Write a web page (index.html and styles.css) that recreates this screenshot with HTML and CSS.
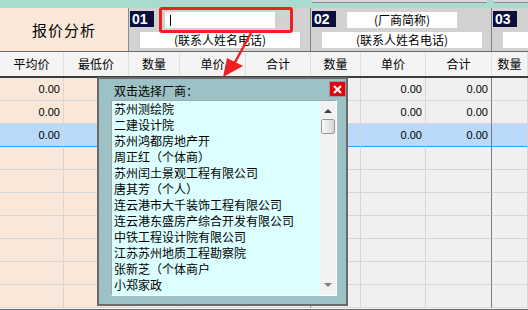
FILE: index.html
```html
<!DOCTYPE html>
<html>
<head>
    <link rel="stylesheet" href="styles.css">
</head>
<body>
    <div class="topbar">
        <span class="tb-box tb-a"></span>
        <span class="tb-box tb-b"></span>
    </div>
    <div class="head">
        <div class="title">报价分析</div>
        <div class="group">
            <div class="g-row">
                <span class="num">01</span>
                <span class="name-box"><span class="caret"></span></span>
            </div>
            <div class="contact">(联系人姓名电话)</div>
        </div>
        <div class="group">
            <div class="g-row">
                <span class="num">02</span>
                <span class="name-box">(厂商简称)</span>
            </div>
            <div class="contact">(联系人姓名电话)</div>
        </div>
        <div class="group last">
            <div class="g-row">
                <span class="num">03</span>
                <span class="name-box"></span>
            </div>
            <div class="contact"></div>
        </div>
    </div>
    <div class="cols grid">
        <div>平均价</div>
        <div>最低价</div>
        <div>数量</div>
        <div>单价</div>
        <div class="sep">合计</div>
        <div>数量</div>
        <div>单价</div>
        <div class="sep">合计</div>
        <div>数量</div>
    </div>
    <div id="rows"></div>
    <div class="bottom"></div>

    <div class="highlight"></div>
    <svg class="arrow" width="528" height="310" viewBox="0 0 528 310">
        <line x1="251" y1="33" x2="233" y2="66" stroke="#f02020" stroke-width="2.5"/>
        <polygon points="223,77 227,58 243,66" fill="#f02020"/>
    </svg>

    <div class="popup">
        <div class="close">
            <svg width="9" height="9" viewBox="0 0 9 9">
                <path d="M1 1 L8 8 M8 1 L1 8" stroke="#fff" stroke-width="2.2"/>
            </svg>
        </div>
        <div class="label">双击选择厂商：</div>
        <div class="list">
            <div class="items">
                <div>苏州测绘院</div>
                <div>二建设计院</div>
                <div>苏州鸿都房地产开</div>
                <div>周正红（个体商）</div>
                <div>苏州闰土景观工程有限公司</div>
                <div>唐其芳（个人）</div>
                <div>连云港市大千装饰工程有限公司</div>
                <div>连云港东盛房产综合开发有限公司</div>
                <div>中铁工程设计院有限公司</div>
                <div>江苏苏州地质工程勘察院</div>
                <div>张新芝（个体商户</div>
                <div>小郑家政</div>
                <div>上海王行</div>
            </div>
            <div class="scroll">
                <span class="up"></span>
                <span class="thumb"></span>
                <span class="down"></span>
            </div>
        </div>
    </div>

    <script>
        // 10 data rows, the first three carry values, the third is selected
        const rows = document.getElementById('rows');
        for (let i = 0; i < 10; i++) {
            const row = document.createElement('div');
            row.className = 'row grid' + (i === 2 ? ' selected' : '');
            const v = i < 3 ? '0.00' : '';
            row.innerHTML = `
                <div class="peach">${v}</div>
                <div class="peach"></div>
                <div></div>
                <div></div>
                <div class="sep"></div>
                <div></div>
                <div>${v}</div>
                <div class="sep">${v}</div>
                <div></div>
            `;
            rows.appendChild(row);
        }
    </script>
</body>
</html>
```

FILE: styles.css
```css
* {
    box-sizing: border-box;
}
body {
    margin: 0;
    width: 528px;
    height: 310px;
    overflow: hidden;
    position: relative;
    font-family: "Noto Sans CJK SC", "Liberation Sans", sans-serif;
    font-size: 12px;
    color: #000;
    background: #f0f0f0;
}
.topbar {
    height: 8px;
    background: #a7dccf;
    position: relative;
}
.tb-box {
    position: absolute;
    top: 0;
    height: 3px;
    background: #dadada;
    border-bottom: 1px solid #8a8a8a;
}
.tb-a {
    left: 312px;
    width: 175px;
}
.tb-b {
    left: 494px;
    width: 34px;
}
.head {
    display: grid;
    grid-template-columns: 129px 182px 181px 1fr;
    height: 44px;
    border-bottom: 1px solid #6a6a6a;
}
.title {
    background: #f9e8da;
    border-right: 1px solid #8a8a8a;
    display: flex;
    align-items: center;
    justify-content: center;
    font-size: 15px;
    letter-spacing: 1px;
}
.group {
    background: #d2d2d2;
    border-right: 1px solid #808080;
    padding: 3px 0 0 1px;
}
.group.last {
    border-right: none;
}
.g-row {
    display: flex;
    align-items: flex-start;
    gap: 11px;
}
.num {
    width: 24px;
    height: 16px;
    background: #0b0f3c;
    color: #fff;
    font-family: "Liberation Sans", sans-serif;
    font-weight: bold;
    font-size: 14px;
    line-height: 16px;
    padding-left: 2px;
}
.name-box {
    width: 110px;
    height: 16px;
    margin-top: 1px;
    background: #fff;
    line-height: 16px;
    text-align: center;
    position: relative;
}
.caret {
    position: absolute;
    left: 5px;
    top: 3px;
    width: 1px;
    height: 11px;
    background: #000;
}
.contact {
    width: 160px;
    height: 16px;
    margin: 4px 0 0 10px;
    background: #fff;
    line-height: 16px;
    text-align: center;
}
.grid {
    display: grid;
    grid-template-columns: 64px 65px 51px 66px 65px 50px 65px 66px 1fr;
}
.cols {
    height: 26px;
    background: #f4f4f4;
    border-bottom: 2px solid #3c3c3c;
}
.cols div {
    border-right: 1px solid #e0e0e0;
    text-align: center;
    line-height: 24px;
}
.row {
    height: 23px;
}
.row div {
    background: #f0f0f0;
    border-right: 1px solid #d6d6d6;
    border-bottom: 1px solid #d6d6d6;
    text-align: right;
    padding-right: 3px;
    line-height: 22px;
    font-family: "Liberation Sans", sans-serif;
    font-size: 11px;
}
.row div.peach {
    background: #f9e8da;
}
.row div.sep {
    border-right-color: #7a7a7a;
}
.row.selected {
    box-shadow: 0 -1px 0 #3c9cf0;
}
.row.selected div {
    background: #b9d9fa;
    border-bottom-color: #3c9cf0;
}
.row.selected div.peach {
    background: #b9d9fa;
}
.bottom {
    height: 4px;
    background: #6a6a6a;
    border-top: 1px solid #f8f8f8;
}
.highlight {
    position: absolute;
    left: 159px;
    top: 7px;
    width: 134px;
    height: 26px;
    border: 3px solid #f02020;
    border-radius: 3px;
}
.arrow {
    position: absolute;
    left: 0;
    top: 0;
    pointer-events: none;
    z-index: 2;
}
.popup {
    position: absolute;
    left: 97px;
    top: 77px;
    width: 251px;
    height: 229px;
    background: #9cc2c6;
    border: 2px solid #6a6a6a;
}
.close {
    position: absolute;
    top: 2px;
    right: 0;
    width: 17px;
    height: 16px;
    background: #e8000c;
    border: 1px solid #9a9a9a;
    display: flex;
    align-items: center;
    justify-content: center;
}
.label {
    margin-top: 4px;
    padding-left: 15px;
    line-height: 16px;
}
.list {
    margin: 1px 0 0 12px;
    width: 226px;
    height: 196px;
    background: #dcffff;
    border: 1px solid #ffffff;
    border-top-color: #a8a8a8;
    border-left-color: #a8a8a8;
    display: flex;
    overflow: hidden;
}
.items {
    flex: 1;
    padding-left: 2px;
    line-height: 16px;
    white-space: nowrap;
    overflow: hidden;
}
.scroll {
    width: 16px;
    background: #f2f2f2;
    position: relative;
}
.up,
.down {
    position: absolute;
    left: 4px;
    width: 0;
    height: 0;
    border-left: 4px solid transparent;
    border-right: 4px solid transparent;
}
.up {
    top: 8px;
    border-bottom: 4px solid #404040;
}
.down {
    bottom: 8px;
    border-top: 4px solid #808080;
}
.thumb {
    position: absolute;
    left: 1px;
    top: 18px;
    width: 14px;
    height: 15px;
    border: 1px solid #9a9a9a;
    border-radius: 2px;
    background: linear-gradient(to right, #fafafa, #d6d6d6);
}
```
